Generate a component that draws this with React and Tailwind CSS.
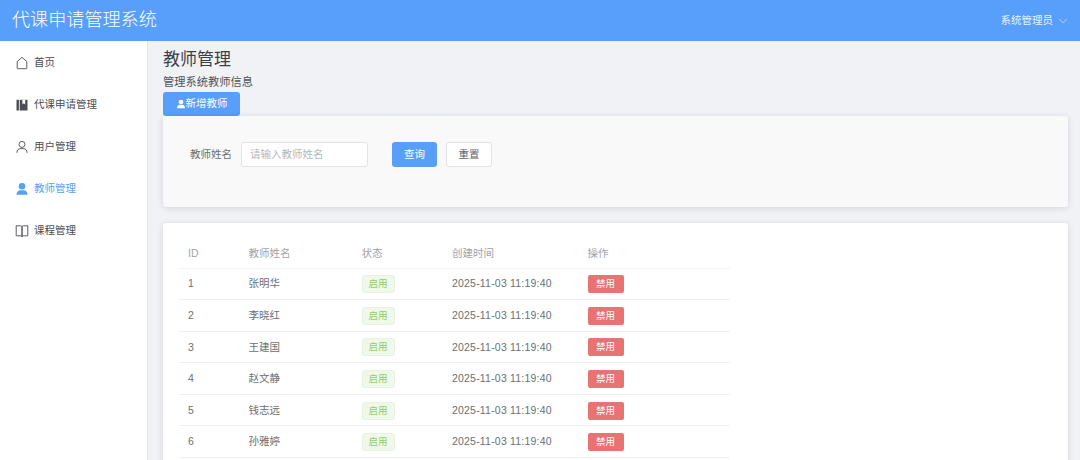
import React from 'react';
import { ChevronDown } from 'lucide-react';

const FONT = 'font-["Liberation_Sans","Noto_Sans_CJK_SC",sans-serif]';

const HouseIcon = () => (
    <svg viewBox="0 0 14 14" className="w-[14px] h-[14px]" fill="none" stroke="currentColor" strokeWidth="0.9">
        <path d="M2.2 5.6 7 1.3l4.8 4.3v6.6a.5.5 0 0 1-.5.5H2.7a.5.5 0 0 1-.5-.5z" />
    </svg>
);

const BooksIcon = () => (
    <svg viewBox="0 0 14 14" className="w-[14px] h-[14px]" fill="currentColor">
        <path d="M1.5 1.800h2.400v10.700H1.500z" />
        <path d="M4.700 1.800h7.800v10.700H4.700z" />
        <path d="M7.400 1.800h2.800v4.600L8.800 5.300 7.400 6.400z" fill="#ffffff" />
    </svg>
);

const UserIcon = () => (
    <svg viewBox="0 0 14 14" className="w-[14px] h-[14px]" fill="none" stroke="currentColor" strokeWidth="0.9">
        <circle cx="7" cy="4.4" r="3" />
        <path d="M1.900 12.800c0-2.700 1.600-4.200 3.400-4.200h3.400c1.800 0 3.400 1.500 3.400 4.200" />
    </svg>
);

const UserFilledIcon = ({ className = 'w-[14px] h-[14px]' }) => (
    <svg viewBox="0 0 14 14" className={className} fill="currentColor">
        <circle cx="7" cy="4.2" r="3.3" />
        <path d="M1.400 12.800c0-2.900 1.900-4.600 4-4.600h3.200c2.100 0 4 1.700 4 4.600z" />
    </svg>
);

const BookIcon = () => (
    <svg viewBox="0 0 14 14" className="w-[14px] h-[14px]" fill="none" stroke="currentColor" strokeWidth="0.9">
        <path d="M1.200 1.800h4.400c.8 0 1.400.4 1.400 1.200v9.600c0-.6-.6-.8-1.400-.8H1.200z" />
        <path d="M12.800 1.800H8.400c-.8 0-1.400.4-1.400 1.200v9.600c0-.6.6-.8 1.400-.8h4.400z" />
    </svg>
);

const menu = [
    { name: '首页', icon: <HouseIcon /> },
    { name: '代课申请管理', icon: <BooksIcon /> },
    { name: '用户管理', icon: <UserIcon /> },
    { name: '教师管理', icon: <UserFilledIcon />, active: true },
    { name: '课程管理', icon: <BookIcon /> },
];

const teachers = [
    { id: 1, name: '张明华' },
    { id: 2, name: '李晓红' },
    { id: 3, name: '王建国' },
    { id: 4, name: '赵文静' },
    { id: 5, name: '钱志远' },
    { id: 6, name: '孙雅婷' },
];

export default function App() {
    return (
        <div className={`h-[460px] w-[1080px] overflow-hidden flex flex-col bg-[#f0f2f6] ${FONT}`}>
            <header className="h-[41px] shrink-0 bg-[#579ffb] flex items-center justify-between pl-[12px] pr-[10px] text-white">
                <div className="text-[18.1px] leading-none font-light">代课申请管理系统</div>
                <div className="flex items-center gap-[3px] text-[10.5px] text-[#e8f2ff]">
                    <span>系统管理员</span>
                    <ChevronDown size={14} strokeWidth={1.1} />
                </div>
            </header>

            <div className="flex flex-1 min-h-0">
                <aside className="w-[148px] shrink-0 bg-white border-r border-[#e1e3e8] pt-px">
                    {menu.map(item => (
                        <div
                            key={item.name}
                            className={`h-[42px] flex items-center gap-[5px] pl-[15px] text-[10.5px] ${item.active ? 'text-[#579ffb]' : 'text-[#4a4d53]'}`}
                        >
                            {item.icon}
                            <span>{item.name}</span>
                        </div>
                    ))}
                </aside>

                <main className="flex-1 min-w-0 pl-[15px] pr-[12px] pt-[8px]">
                    <h1 className="text-[17px] leading-[22px] font-normal text-[#3b3f45]">教师管理</h1>
                    <p className="mt-[4px] text-[11.25px] leading-[15px] text-[#4f5258]">管理系统教师信息</p>
                    <button className="mt-[2px] h-[23.5px] w-[77px] flex items-center justify-center rounded-[3px] bg-[#579ffb] text-white text-[10.5px]">
                        <UserFilledIcon className="w-[10px] h-[10px]" />
                        <span>新增教师</span>
                    </button>

                    <section className="mt-[0.5px] h-[91px] rounded-[3px] bg-[#f9f9fa] shadow-[0_1px_6px_rgba(0,0,0,0.12)] pl-[27px] pt-[26px] flex items-start">
                        <label className="w-[42px] h-[25px] flex items-center text-[10.5px] text-[#6a6d72] whitespace-nowrap">教师姓名</label>
                        <div className="ml-[9px] w-[127px] h-[25px] rounded-[3px] bg-white border border-[#e1e3e8] pl-[8px] flex items-center text-[10.5px] text-[#b4b7bd]">
                            请输入教师姓名
                        </div>
                        <button className="ml-[24px] w-[45px] h-[25px] rounded-[3px] bg-[#579ffb] text-white text-[10.5px]">查询</button>
                        <button className="ml-[9px] w-[46px] h-[25px] rounded-[3px] bg-white border border-[#e1e3e8] text-[#606368] text-[10.5px]">重置</button>
                    </section>

                    <section className="mt-[16px] h-[300px] rounded-[3px] bg-white shadow-[0_1px_6px_rgba(0,0,0,0.12)] pl-[16px] pt-[15px]">
                        <table className="w-[551px] table-fixed border-collapse text-[10.5px] text-left">
                            <thead>
                                <tr className="h-[30px] border-b border-[#f3f4f8] text-[#a0a3a8]">
                                    <th className="w-[69.5px] pl-[9px] pt-[2px] font-normal">ID</th>
                                    <th className="w-[113px] pt-[2px] font-normal">教师姓名</th>
                                    <th className="w-[90px] pt-[2px] font-normal">状态</th>
                                    <th className="w-[136px] pl-[0.5px] pt-[2px] font-normal">创建时间</th>
                                    <th className="pt-[2px] font-normal">操作</th>
                                </tr>
                            </thead>
                            <tbody>
                                {teachers.map(t => (
                                    <tr key={t.id} className="h-[31.6px] border-b border-[#eeeff2] text-[#6c6f74]">
                                        <td className="pl-[9px] pt-px">{t.id}</td>
                                        <td className="pt-px">{t.name}</td>
                                        <td className="pt-px">
                                            <span className="w-[33px] h-[18px] flex items-center justify-center rounded-[3px] bg-[#f0f8ea] border border-[#e8f3df] text-[#8fce6b] text-[9.5px]">启用</span>
                                        </td>
                                        <td className="pl-[0.5px] pt-px whitespace-nowrap tracking-[0.2px]">2025-11-03 11:19:40</td>
                                        <td className="pt-px">
                                            <span className="w-[36px] h-[18px] flex items-center justify-center rounded-[2px] bg-[#e77373] text-white text-[9.5px]">禁用</span>
                                        </td>
                                    </tr>
                                ))}
                            </tbody>
                        </table>
                    </section>
                </main>
            </div>
        </div>
    );
}
